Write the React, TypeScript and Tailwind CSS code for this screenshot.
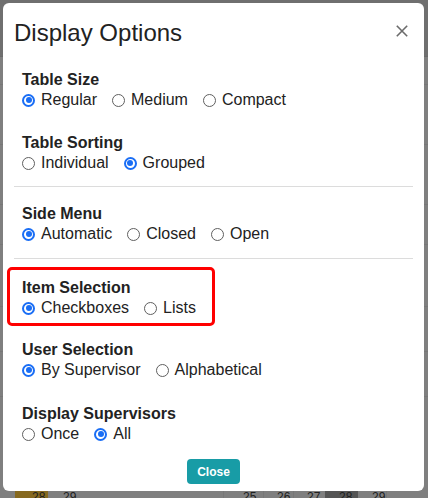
import { useState } from 'react'

type Section = {
  title: string
  options: string[]
  value: string
}

const groups: (Section | 'divider')[] = [
  { title: 'Table Size', options: ['Regular', 'Medium', 'Compact'], value: 'Regular' },
  { title: 'Table Sorting', options: ['Individual', 'Grouped'], value: 'Grouped' },
  'divider',
  { title: 'Side Menu', options: ['Automatic', 'Closed', 'Open'], value: 'Automatic' },
  'divider',
  { title: 'Item Selection', options: ['Checkboxes', 'Lists'], value: 'Checkboxes' },
  { title: 'User Selection', options: ['By Supervisor', 'Alphabetical'], value: 'By Supervisor' },
  { title: 'Display Supervisors', options: ['Once', 'All'], value: 'All' },
]

function Radio({ checked }: { checked: boolean }) {
  return checked ? (
    <span className="flex h-[13px] w-[13px] shrink-0 items-center justify-center rounded-full border-2 border-[#1a6ef5] bg-white">
      <span className="h-[6px] w-[6px] rounded-full bg-[#1a6ef5]" />
    </span>
  ) : (
    <span className="h-[13px] w-[13px] shrink-0 rounded-full border border-[#5f5f5f] bg-white" />
  )
}

function OptionGroup({ section, highlight }: { section: Section; highlight?: boolean }) {
  const [value, setValue] = useState(section.value)
  return (
    <div className="relative pl-[8px]">
      {highlight && (
        <div className="pointer-events-none absolute -top-[11px] -bottom-[8px] left-[-7px] w-[208px] rounded-[5px] border-[3px] border-[#ff0000]" />
      )}
      <div className="text-[16px] leading-[20px] font-bold text-[#222]">{section.title}</div>
      <div className="flex items-center gap-[15px] text-[16px] leading-[20px] text-[#222]">
        {section.options.map(opt => (
          <label key={opt} className="flex cursor-pointer items-center gap-[6px]" onClick={() => setValue(opt)}>
            <Radio checked={value === opt} />
            <span>{opt}</span>
          </label>
        ))}
      </div>
    </div>
  )
}

function Backdrop() {
  return (
    <div className="flex h-full flex-col bg-[#7f7f7f] text-[11px] leading-[14px] text-[#1a1a1a]">
      <div className="h-[57px] border-b border-[#6a6a6a] bg-[#6f6f6f]" />
      <div className="h-[28px] border-b border-[#777]" />
      <div className="h-[60px] border-b border-[#777]" />
      <div className="h-[60px] border-b border-[#777]" />
      <div className="h-[40px] border-b border-[#777]" />
      <div className="h-[62px] border-b border-[#777]" />
      <div className="h-[45px] border-b border-[#777]" />
      <div className="h-[45px] border-b border-[#777]" />
      <div className="flex-1" />
      <div className="mb-[-7px] flex h-[16px] items-start text-[12px] leading-[16px] text-[#202020]">
        <span className="w-[15px]" />
        <span className="w-[33px] bg-[#86691f] pl-[17px]">28</span>
        <span className="w-[12px] border-r border-[#777]" />
        <span className="w-[17px] pl-[3px]">29</span>
        <span className="w-[33px] border-l border-[#777]" />
        <span className="w-[33px] bg-[#8a8a8a]" />
        <span className="w-[80px] border-l border-[#777]" />
        <span className="w-[40px] border-l border-[#777] pl-[19px]">25</span>
        <span className="w-[30px] border-l border-[#777] pl-[13px]">26</span>
        <span className="w-[32px] border-l border-[#777] pl-[13px]">27</span>
        <span className="w-[33px] bg-[#555] pl-[14px]">28</span>
        <span className="w-[29px] border-r border-[#777] pl-[14px]">29</span>
      </div>
    </div>
  )
}

export default function App() {
  return (
    <div
      className="relative h-[498px] w-[428px] overflow-hidden"
      style={{ fontFamily: '"Liberation Sans", Arial, Helvetica, sans-serif' }}
    >
      <Backdrop />
      <div className="absolute top-[3px] left-[3px] flex h-[488px] w-[421px] flex-col rounded-[6px] bg-white px-[11px]">
        <div className="flex items-start justify-between pt-[15px]">
          <h1 className="text-[24px] leading-[29px] font-normal text-[#222]">Display Options</h1>
          <button className="mt-[7px] mr-[5px] flex h-[12px] w-[12px] items-center justify-center" aria-label="Close">
            <svg width="12" height="12" viewBox="0 0 12 12">
              <path d="M0.8 0.8 L11.2 11.2 M11.2 0.8 L0.8 11.2" stroke="#6b6b6b" strokeWidth="1.6" fill="none" />
            </svg>
          </button>
        </div>
        <div className="mt-[23px] flex flex-col">
          <OptionGroup section={groups[0] as Section} />
          <div className="mt-[23px]">
            <OptionGroup section={groups[1] as Section} />
          </div>
          <hr className="mt-[13px] border-t border-[#dcdcdc]" />
          <div className="mt-[17px]">
            <OptionGroup section={groups[3] as Section} />
          </div>
          <hr className="mt-[14px] border-t border-[#dcdcdc]" />
          <div className="mt-[19px]">
            <OptionGroup section={groups[5] as Section} highlight />
          </div>
          <div className="mt-[22px]">
            <OptionGroup section={groups[6] as Section} />
          </div>
          <div className="mt-[24px]">
            <OptionGroup section={groups[7] as Section} />
          </div>
        </div>
        <div className="mt-[15px] flex justify-center">
          <button className="h-[25px] rounded-[4px] bg-[#189ca6] px-[10px] text-[12px] font-bold text-white">
            Close
          </button>
        </div>
      </div>
    </div>
  )
}
